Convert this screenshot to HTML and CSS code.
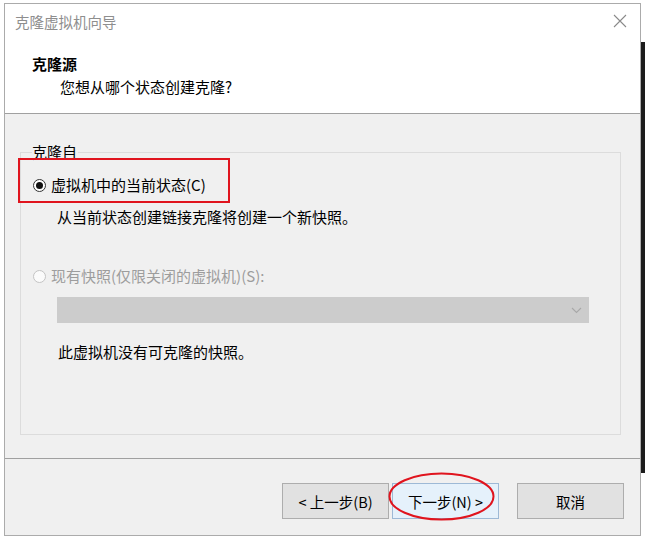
FILE: index.html
```html
<!DOCTYPE html>
<html lang="zh-CN">
<head>
<meta charset="utf-8">
<title>克隆虚拟机向导</title>
<link rel="stylesheet" href="styles.css">
</head>
<body>
<div class="page">
  <div class="window">
    <div class="header">
      <div class="titlebar">
        <span class="title">克隆虚拟机向导</span>
        <svg class="close" width="14" height="14" viewBox="0 0 14 14"><path d="M1 1 L13 13 M13 1 L1 13" stroke="#8a8a8a" stroke-width="1.1" fill="none"/></svg>
      </div>
      <div class="heading">克隆源</div>
      <div class="subheading">您想从哪个状态创建克隆?</div>
    </div>
    <div class="content">
      <fieldset class="group">
        <legend class="legend">克隆自</legend>
        <div class="option option-first">
          <span class="radio radio-checked"><span class="dot"></span></span>
          <span class="label">虚拟机中的当前状态(C)</span>
          <span class="mark-rect"></span>
        </div>
        <div class="desc">从当前状态创建链接克隆将创建一个新快照。</div>
        <div class="option option-second">
          <span class="radio radio-disabled"></span>
          <span class="label label-disabled">现有快照(仅限关闭的虚拟机)(S):</span>
        </div>
        <div class="select">
          <svg class="chev" width="11" height="7" viewBox="0 0 11 7"><path d="M1 1 L5.5 5.5 L10 1" stroke="#a8a8a8" stroke-width="1.1" fill="none"/></svg>
        </div>
        <div class="note">此虚拟机没有可克隆的快照。</div>
      </fieldset>
    </div>
    <div class="footer">
      <button class="btn">&lt; 上一步(B)</button>
      <button class="btn btn-default">下一步(N) &gt;</button>
      <button class="btn btn-cancel">取消</button>
      <svg class="mark-ellipse" width="107" height="49" viewBox="0 0 107 49"><ellipse cx="53.5" cy="24.5" rx="52" ry="23" stroke="#e0141e" stroke-width="2" fill="none"/></svg>
    </div>
  </div>
  <div class="shadow"></div>
</div>
</body>
</html>
```

FILE: styles.css
```css
html, body {
  margin: 0;
  padding: 0;
  background: #ffffff;
}

body {
  font-family: "Noto Sans CJK SC", "Microsoft YaHei", sans-serif;
  font-size: 15px;
  line-height: 20px;
  color: #000;
}

.page {
  display: flex;
  align-items: flex-start;
  width: 645px;
  height: 538px;
  overflow: hidden;
}

.window {
  margin: 3px 0 0 4px;
  width: 637px;
  height: 533px;
  box-sizing: border-box;
  border: 1px solid #ababab;
  display: flex;
  flex-direction: column;
  background: #f0f0f0;
}

.shadow {
  margin-top: 42px;
  width: 4px;
  height: 431px;
  background: #1c1c1c;
}

/* header */
.header {
  background: #ffffff;
  height: 110px;
  box-sizing: border-box;
  border-bottom: 1px solid #a0a0a0;
  padding-top: 8px;
}

.titlebar {
  display: flex;
  justify-content: space-between;
  align-items: center;
  padding: 0 13px 0 10px;
  height: 20px;
}

.title {
  color: #8e8e8e;
  font-size: 14.5px;
}

.close {
  display: block;
  margin-top: -2px;
}

.heading {
  margin-top: 22px;
  padding-left: 27px;
  font-weight: bold;
}

.subheading {
  margin-top: 3px;
  padding-left: 55px;
}

/* content */
.content {
  flex: 1;
  display: flex;
  flex-direction: column;
  padding: 28px 19px 23px 15px;
  border-bottom: 1px solid #a0a0a0;
}

.group {
  flex: 1;
  margin: 0;
  min-width: 0;
  border: 1px solid #dcdcdc;
  padding: 0 10px 0 11px;
}

.legend {
  padding: 0 1px 0 0;
  margin-left: 0;
  line-height: 20px;
}

.option {
  position: relative;
  display: flex;
  align-items: center;
  height: 20px;
}

.option-first {
  margin-top: 13px;
}

.option-second {
  margin-top: 39px;
}

.radio {
  width: 13px;
  height: 13px;
  box-sizing: border-box;
  border-radius: 50%;
  border: 1px solid #333333;
  background: #ffffff;
  display: flex;
  align-items: center;
  justify-content: center;
  margin-left: 1px;
  margin-right: 5px;
}

.dot {
  width: 7px;
  height: 7px;
  border-radius: 50%;
  background: #111111;
}

.radio-disabled {
  border-color: #c4c4c4;
  background: #fbfbfb;
}

.label-disabled {
  color: #9d9d9d;
}

.mark-rect {
  position: absolute;
  left: -14px;
  top: -17px;
  width: 212px;
  height: 45px;
  box-sizing: border-box;
  border: 2px solid #e0141e;
}

.desc {
  margin-top: 12px;
  padding-left: 25px;
}

.select {
  margin: 11px 0 0 25px;
  width: 532px;
  height: 26px;
  background: #cccccc;
  display: flex;
  align-items: center;
  justify-content: flex-end;
}

.chev {
  display: block;
  margin-right: 7px;
}

.note {
  margin-top: 19px;
  padding-left: 26px;
}

/* footer */
.footer {
  position: relative;
  flex: none;
  height: 76px;
  box-sizing: border-box;
  display: flex;
  align-items: flex-start;
  justify-content: flex-end;
  padding: 24px 16px 0 0;
}

.btn {
  width: 107px;
  height: 36px;
  box-sizing: border-box;
  border: 1px solid #adadad;
  background: #e1e1e1;
  font-family: "Noto Sans CJK SC", "Microsoft YaHei", sans-serif;
  font-size: 14.5px;
  color: #000;
  padding: 0;
  margin: 0;
}

.btn-default {
  margin-left: 3px;
  background: #e5f1fb;
  border-color: #9db9d6;
}

.btn-cancel {
  margin-left: 18px;
}

.mark-ellipse {
  position: absolute;
  left: 383px;
  top: 13px;
}
```
